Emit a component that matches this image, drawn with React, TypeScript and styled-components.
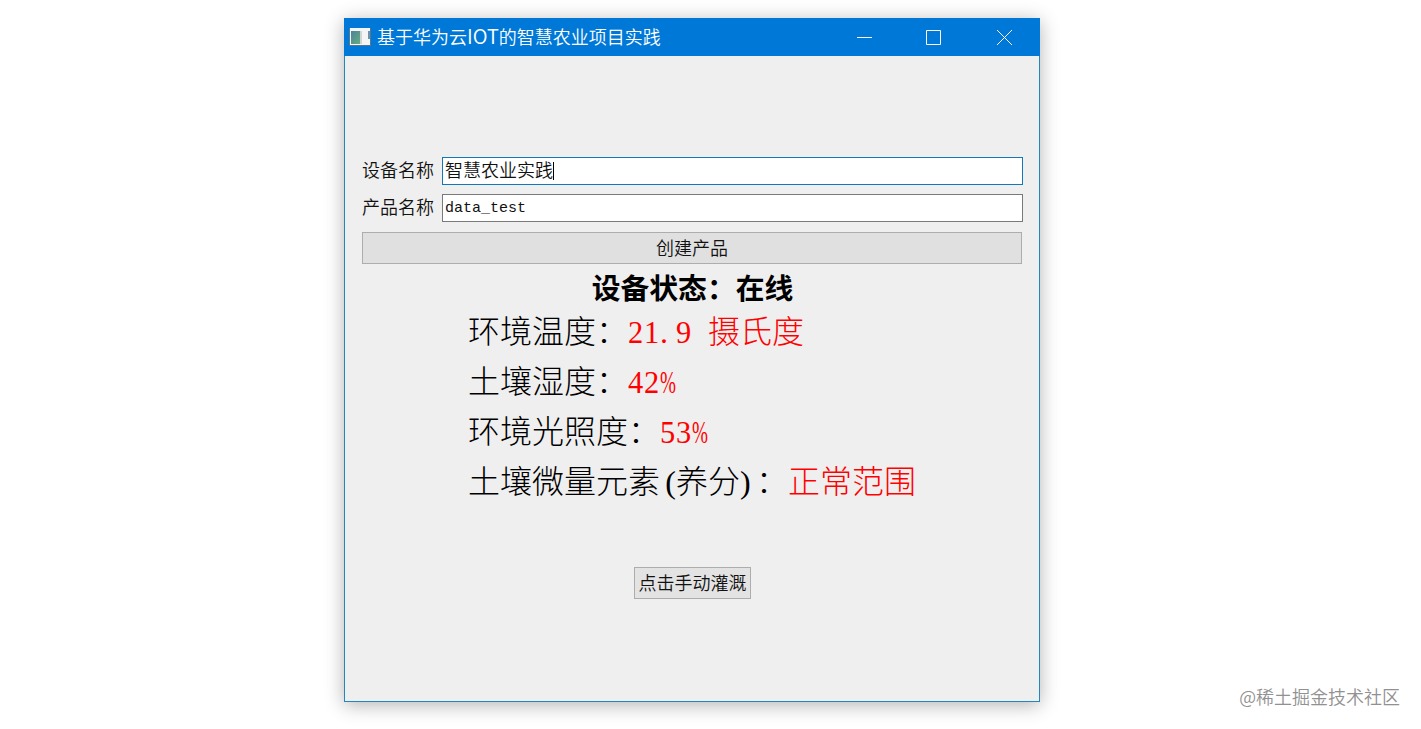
import styled, { createGlobalStyle } from "styled-components";

const GlobalStyle = createGlobalStyle`
  body {
    margin: 0;
    background: #fff;
    overflow: hidden;
  }
`;

const Page = styled.div`
  position: relative;
  box-sizing: border-box;
  height: 729px;
  padding-top: 18px;
  padding-left: 344px;
  font-family: "Liberation Serif", "Noto Sans CJK SC", sans-serif;
`;

const Window = styled.main`
  box-sizing: border-box;
  width: 696px;
  height: 684px;
  border: 1px solid #2187bd;
  background: #efefef;
  box-shadow: 0 3px 18px rgba(0, 0, 0, 0.3);
`;

const TitleBar = styled.header`
  display: flex;
  align-items: center;
  height: 38px;
  margin: -1px -1px 0;
  padding-left: 5px;
  background: #0078d7;
  color: #fff;
`;

const Title = styled.h1`
  flex: 1;
  margin: 0 0 2px 6px;
  font: 350 18px/36px "Noto Sans CJK SC", sans-serif;
  white-space: nowrap;
`;

const Latin = styled.span`
  font-size: 20px;
  line-height: 1;
`;

const Controls = styled.div`
  display: flex;
`;

const ControlButton = styled.button`
  display: flex;
  align-items: center;
  justify-content: center;
  width: 70px;
  height: 38px;
  padding: 0;
  border: none;
  background: none;
`;

const Body = styled.section`
  display: flex;
  flex-direction: column;
  padding: 101px 16px 0 17px;
`;

const Field = styled.label`
  display: flex;
  align-items: center;
  height: 28px;
  margin-bottom: 9px;
  font-size: 18px;
  font-weight: 350;
  color: #111;
`;

const FieldName = styled.span`
  width: 80px;
  line-height: 28px;
  white-space: nowrap;
`;

const FieldValue = styled.div<{ $focused?: boolean; $mono?: boolean }>`
  box-sizing: border-box;
  display: flex;
  align-items: center;
  flex: 1;
  height: 28px;
  padding-left: 2px;
  border: 1px solid ${(p) => (p.$focused ? "#1277bb" : "#7a7a7a")};
  background: #fff;
  line-height: 26px;
  ${(p) =>
    p.$mono &&
    `
    padding-top: 2px;
    font: 400 15px/24px "Liberation Mono", monospace;
  `}
`;

const Caret = styled.span`
  width: 1px;
  height: 18px;
  background: #000;
`;

const PushButton = styled.button<{ $small?: boolean }>`
  box-sizing: border-box;
  width: ${(p) => (p.$small ? "117px" : "660px")};
  height: 32px;
  padding: 0 0 2px;
  border: 1px solid #adadad;
  background: ${(p) => (p.$small ? "#e3e3e3" : "#e0e0e0")};
  color: #111;
  font: 350 18px/28px "Noto Sans CJK SC", sans-serif;
  white-space: nowrap;
`;

const CreateButton = styled(PushButton)`
  margin-top: 1px;
`;

const IrrigateButton = styled(PushButton)`
  margin: 63px 0 0 272px;
`;

const Status = styled.h2`
  margin: 1px 0 0;
  font: 700 28.8px/43px "Noto Sans CJK SC", sans-serif;
  text-align: center;
  white-space: nowrap;
`;

const Readings = styled.div`
  display: flex;
  flex-direction: column;
  margin: -4px 0 0 106px;
`;

const Reading = styled.div`
  height: 50px;
  font: 300 32px/50px "Noto Sans CJK SC", sans-serif;
  color: #000;
  white-space: nowrap;
`;

const Value = styled.span`
  color: #f00;
`;

// half-width cell, so latin characters keep the grid of the CJK text
const Cell = styled.span<{ $scale: number; $right?: boolean }>`
  display: inline-block;
  width: 16px;
  font-family: "Liberation Serif", serif;
  text-align: ${(p) => (p.$right ? "right" : "left")};
  white-space: pre;
  transform: scaleX(${(p) => p.$scale});
  transform-origin: left;
`;

const Watermark = styled.div`
  position: absolute;
  right: 21px;
  bottom: 19px;
  color: #919191;
  font: 350 18px/27px "Noto Sans CJK SC", sans-serif;
  white-space: nowrap;
`;

const readings = [
  { name: "环境温度：", value: "21.9 摄氏度" },
  { name: "土壤湿度：", value: "42%" },
  { name: "环境光照度：", value: "53%" },
  { name: "土壤微量元素(养分)：", value: "正常范围" },
];

function cellScale(char: string) {
  if (char === "%") return 0.6;
  return /\d/.test(char) ? 0.95 : 1;
}

function GridText({ text }: { text: string }) {
  return (
    <>
      {text.split(/([\x20-\x7e])/).map((part, i) =>
        /^[\x20-\x7e]$/.test(part) ? (
          <Cell key={i} $scale={cellScale(part)} $right={part === "("}>
            {part}
          </Cell>
        ) : (
          part
        )
      )}
    </>
  );
}

function AppIcon() {
  return (
    <svg width="22" height="18" viewBox="0 0 22 18">
      <defs>
        <linearGradient id="pane" x1="0" y1="0" x2="1" y2="1">
          <stop offset="0" stopColor="#4c829b" />
          <stop offset="1" stopColor="#65ad7d" />
        </linearGradient>
      </defs>
      <path d="M0 0h22v18H0z" fill="#54778f" />
      <path d="M1 0h20v17H1z" fill="#f3f5f7" />
      <path d="M2 3h9v13H2z" fill="url(#pane)" />
      <path d="M11 3h2v13h-2z" fill="#d0d5d8" />
      <path d="M19 3h2v8h-2z" fill="#6f94a7" />
    </svg>
  );
}

export default function App() {
  return (
    <Page>
      <GlobalStyle />
      <Window>
        <TitleBar>
          <AppIcon />
          <Title>
            基于华为云<Latin>IOT</Latin>的智慧农业项目实践
          </Title>
          <Controls>
            <ControlButton aria-label="minimize">
              <svg width="16" height="16" stroke="#fff" fill="none">
                <path d="M0 8.5h15" />
              </svg>
            </ControlButton>
            <ControlButton aria-label="maximize">
              <svg width="18" height="16" stroke="#fff" fill="none">
                <path d="M.5 1.5h14v14H.5z" />
              </svg>
            </ControlButton>
            <ControlButton aria-label="close">
              <svg width="16" height="16" stroke="#fff" fill="none">
                <path d="M0 1l15 15M15 1L0 16" />
              </svg>
            </ControlButton>
          </Controls>
        </TitleBar>
        <Body>
          <Field>
            <FieldName>设备名称</FieldName>
            <FieldValue $focused>
              智慧农业实践
              <Caret />
            </FieldValue>
          </Field>
          <Field>
            <FieldName>产品名称</FieldName>
            <FieldValue $mono>data_test</FieldValue>
          </Field>
          <CreateButton>创建产品</CreateButton>
          <Status>设备状态：在线</Status>
          <Readings>
            {readings.map((r) => (
              <Reading key={r.name}>
                <GridText text={r.name} />
                <Value>
                  <GridText text={r.value} />
                </Value>
              </Reading>
            ))}
          </Readings>
          <IrrigateButton $small>点击手动灌溉</IrrigateButton>
        </Body>
      </Window>
      <Watermark>@稀土掘金技术社区</Watermark>
    </Page>
  );
}
